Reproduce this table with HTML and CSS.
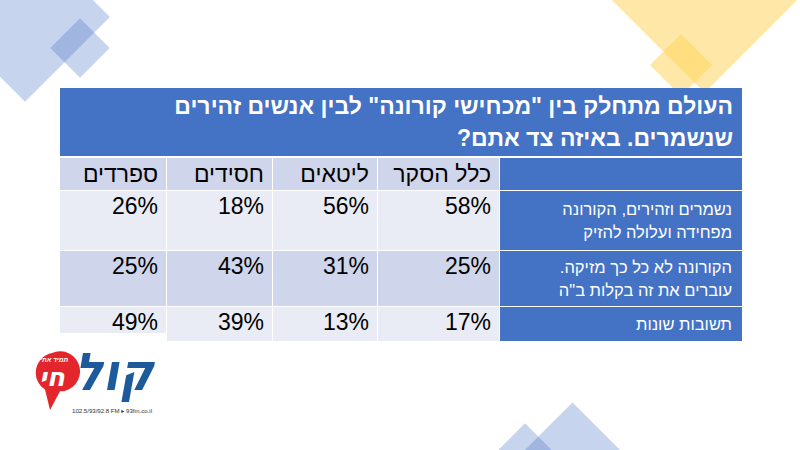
FILE: index.html
```html
<!DOCTYPE html>
<html lang="he" dir="rtl">
<head>
<meta charset="utf-8">
<title>סקר קורונה</title>
<link rel="stylesheet" href="styles.css">
</head>
<body>
<div class="slide">
  <div class="deco deco-blue-big"></div>
  <div class="deco deco-blue-small"></div>
  <div class="deco deco-yellow-big"></div>
  <div class="deco deco-yellow-small"></div>
  <div class="deco deco-bottom-big"></div>
  <div class="deco deco-bottom-small"></div>

  <div class="board">
    <div class="title">העולם מתחלק בין "מכחישי קורונה" לבין אנשים זהירים שנשמרים. באיזה צד אתם?</div>
    <div class="grid">
      <div class="cell label head"></div>
      <div class="cell col-head">כלל הסקר</div>
      <div class="cell col-head">ליטאים</div>
      <div class="cell col-head">חסידים</div>
      <div class="cell col-head">ספרדים</div>

      <div class="cell label">נשמרים וזהירים, הקורונה<br>מפחידה ועלולה להזיק</div>
      <div class="cell val light">58%</div>
      <div class="cell val light">56%</div>
      <div class="cell val light">18%</div>
      <div class="cell val light">26%</div>

      <div class="cell label">הקורונה לא כל כך מזיקה.<br>עוברים את זה בקלות ב"ה</div>
      <div class="cell val dark">25%</div>
      <div class="cell val dark">31%</div>
      <div class="cell val dark">43%</div>
      <div class="cell val dark">25%</div>

      <div class="cell label">תשובות שונות</div>
      <div class="cell val light">17%</div>
      <div class="cell val light">13%</div>
      <div class="cell val light">39%</div>
      <div class="cell val light">49%</div>
    </div>
  </div>

  <div class="logo">
    <svg class="logo-svg" width="166" height="90" viewBox="0 0 166 90" xmlns="http://www.w3.org/2000/svg">
      <text x="114" y="57" class="logo-kol" text-anchor="middle" textLength="79" lengthAdjust="spacingAndGlyphs" direction="rtl">קול</text>
      <path d="M52 20 A20 20 0 1 1 60 58.3 L50 77 L45 56.5 A20 20 0 0 1 52 20 Z" fill="#E3262C"/>
      <text x="53" y="29" class="logo-tag" text-anchor="middle" direction="rtl">תמיד אתי!</text>
      <text x="52" y="53" class="logo-chai" text-anchor="middle" direction="rtl">חי</text>
      <text x="72" y="80" class="logo-fm" textLength="80" lengthAdjust="spacingAndGlyphs" direction="ltr">102.5/93/92.8 FM ▸ 93fm.co.il</text>
    </svg>
  </div>
</div>
</body>
</html>
```
FILE: styles.css
```css
html, body {
  margin: 0;
  padding: 0;
  background: #ffffff;
}

.slide {
  position: relative;
  width: 800px;
  height: 450px;
  overflow: hidden;
  background: #ffffff;
  font-family: "Liberation Sans", "DejaVu Sans", Arial, sans-serif;
  direction: rtl;
}

.deco {
  position: absolute;
  transform: rotate(45deg);
}

.deco-blue-big {
  left: -35px;
  top: -43px;
  width: 120px;
  height: 120px;
  background: rgba(68, 114, 196, 0.3);
}

.deco-blue-small {
  left: 59px;
  top: 27px;
  width: 42px;
  height: 42px;
  background: rgba(68, 114, 196, 0.3);
}

.deco-yellow-big {
  left: 570px;
  top: -232px;
  width: 269px;
  height: 269px;
  background: rgba(255, 214, 94, 0.55);
}

.deco-yellow-small {
  left: 659px;
  top: 43px;
  width: 44px;
  height: 44px;
  background: rgba(255, 214, 94, 0.55);
}

.deco-bottom-big {
  left: 530px;
  top: 420px;
  width: 85px;
  height: 85px;
  background: rgba(68, 114, 196, 0.3);
}

.deco-bottom-small {
  left: 504px;
  top: 432px;
  width: 42px;
  height: 42px;
  background: rgba(68, 114, 196, 0.3);
}

.board {
  position: relative;
  z-index: 1;
  width: 682px;
  margin: 88px 58px 0 0;
  display: flex;
  flex-direction: column;
  gap: 2px;
}

.title {
  background: #4472C4;
  color: #ffffff;
  font-weight: bold;
  font-size: 23px;
  line-height: 32px;
  height: 66px;
  padding: 2px 9px 0 20px;
  text-align: right;
}

.grid {
  display: grid;
  grid-template-columns: 242px 121px 104px 105px 106px;
  grid-template-rows: 32px 59px 55px 34px;
  gap: 1px;
}

.cell {
  box-sizing: border-box;
  text-align: right;
  color: #000000;
}

.label {
  background: #4472C4;
  color: #ffffff;
  font-size: 16.5px;
  line-height: 23px;
  padding: 0 10px 0 4px;
  display: flex;
  align-items: center;
}

.col-head {
  background: #CFD5EA;
  font-size: 23px;
  line-height: 32px;
  padding: 0 8px 0 4px;
}

.val {
  font-size: 23px;
  line-height: 27px;
  padding: 2px 8px 0 4px;
}

.light {
  background: #E9EBF5;
}

.dark {
  background: #CFD5EA;
}

.logo {
  position: absolute;
  z-index: 2;
  left: 0;
  top: 333px;
  width: 166px;
  height: 90px;
  background: #ffffff;
}

.logo-svg {
  display: block;
  overflow: visible;
}

.logo-tag {
  font-family: "Liberation Sans", "DejaVu Sans", sans-serif;
  font-size: 6.5px;
  font-weight: bold;
  font-style: italic;
  fill: #ffffff;
}

.logo-chai {
  font-family: "DejaVu Sans", "Liberation Sans", sans-serif;
  font-size: 26px;
  font-weight: bold;
  font-style: italic;
  fill: #ffffff;
}

.logo-kol {
  font-family: "DejaVu Sans", "Liberation Sans", sans-serif;
  font-size: 52px;
  font-weight: bold;
  font-style: italic;
  fill: #1C5A9C;
}

.logo-fm {
  font-family: "Liberation Sans", "DejaVu Sans", sans-serif;
  font-size: 6px;
  fill: #333333;
}
```
